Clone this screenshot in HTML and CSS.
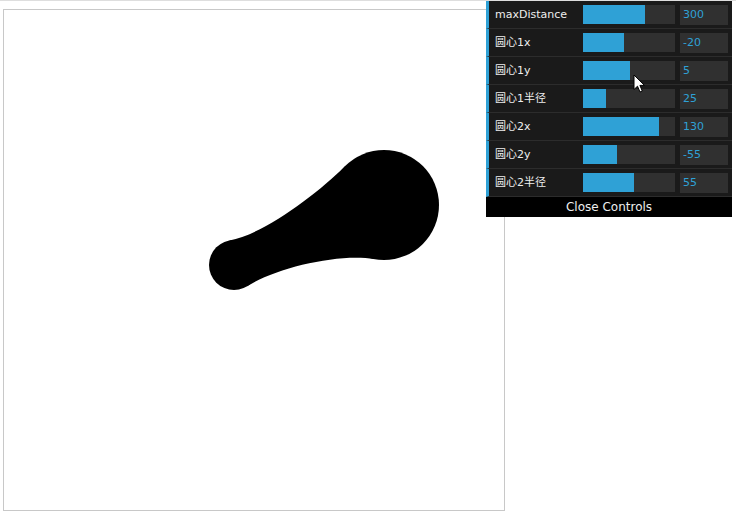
FILE: index.html
```html
<!DOCTYPE html>
<html>
<head>
<meta charset="utf-8">
<title>Metaball</title>
<link rel="stylesheet" href="styles.css">
</head>
<body>
<div class="topline"></div>
<div class="stage">
  <div class="canvas">
    <svg class="balls" width="500" height="500" viewBox="0 0 500 500">
      <circle cx="230" cy="255" r="25"/>
      <circle cx="380" cy="195" r="55"/>
      <path d="M243.5 276 C272.1 257.6 335.8 242.9 370.2 249.1 L341.3 155.9 C312.9 184.1 259.9 224.2 225.5 230.4 Z"/>
    </svg>
  </div>
</div>
<div class="gui">
  <ul class="rows">
    <li class="row"><span class="name">maxDistance</span><div class="ctrl"><div class="slider"><div class="fill" style="width:67%"></div></div><div class="num">300</div></div></li>
    <li class="row"><span class="name">圆心1x</span><div class="ctrl"><div class="slider"><div class="fill" style="width:45%"></div></div><div class="num">-20</div></div></li>
    <li class="row"><span class="name">圆心1y</span><div class="ctrl"><div class="slider"><div class="fill" style="width:51%"></div></div><div class="num">5</div></div></li>
    <li class="row"><span class="name">圆心1半径</span><div class="ctrl"><div class="slider"><div class="fill" style="width:25%"></div></div><div class="num">25</div></div></li>
    <li class="row"><span class="name">圆心2x</span><div class="ctrl"><div class="slider"><div class="fill" style="width:83%"></div></div><div class="num">130</div></div></li>
    <li class="row"><span class="name">圆心2y</span><div class="ctrl"><div class="slider"><div class="fill" style="width:37%"></div></div><div class="num">-55</div></div></li>
    <li class="row"><span class="name">圆心2半径</span><div class="ctrl"><div class="slider"><div class="fill" style="width:55%"></div></div><div class="num">55</div></div></li>
  </ul>
  <div class="close">Close Controls</div>
</div>
<svg class="cursor" width="13" height="20" viewBox="0 0 13 20">
  <path d="M1 1 L1 15.5 L4.5 12.2 L7 18 L9.3 17 L6.9 11.4 L11.5 11.4 Z" fill="#fff" stroke="#000" stroke-width="1" stroke-linejoin="round"/>
</svg>
</body>
</html>
```
FILE: styles.css
```css
* {
  box-sizing: border-box;
}

body {
  margin: 0;
  width: 736px;
  height: 516px;
  overflow: hidden;
  position: relative;
  background: #fff;
  font-family: "DejaVu Sans", "Noto Sans CJK SC", sans-serif;
}

.topline {
  height: 1px;
  background: #dedede;
}

.stage {
  padding: 8px 0 0 3px;
}

.canvas {
  width: 502px;
  height: 502px;
  border: 1px solid #c8c8c8;
  background: #fff;
}

.balls {
  display: block;
  fill: #000;
}

.gui {
  position: absolute;
  top: 1px;
  right: 4px;
  width: 246px;
  font-size: 11px;
  color: #eee;
}

.rows {
  list-style: none;
  margin: 0;
  padding: 0;
}

.row {
  display: flex;
  height: 28px;
  line-height: 27px;
  background: #1a1a1a;
  border-bottom: 1px solid #2c2c2c;
  border-left: 3px solid #2fa1d6;
  padding: 0 4px 0 5px;
}

.name {
  width: 40%;
  padding-left: 1px;
  white-space: nowrap;
  overflow: hidden;
}

.ctrl {
  flex: 1;
  display: flex;
  justify-content: space-between;
  align-items: flex-start;
}

.slider {
  width: 66%;
  height: 19px;
  margin-top: 4px;
  margin-left: -5px;
  background: #303030;
}

.fill {
  height: 100%;
  background: #2fa1d6;
}

.num {
  width: 48px;
  height: 20px;
  margin-top: 4px;
  padding: 0 3px;
  line-height: 20px;
  background: #303030;
  color: #2fa1d6;
}

.close {
  height: 20px;
  line-height: 20px;
  background: #000;
  text-align: center;
  font-size: 12px;
  color: #eee;
}

.cursor {
  position: absolute;
  left: 633px;
  top: 74px;
}
```
